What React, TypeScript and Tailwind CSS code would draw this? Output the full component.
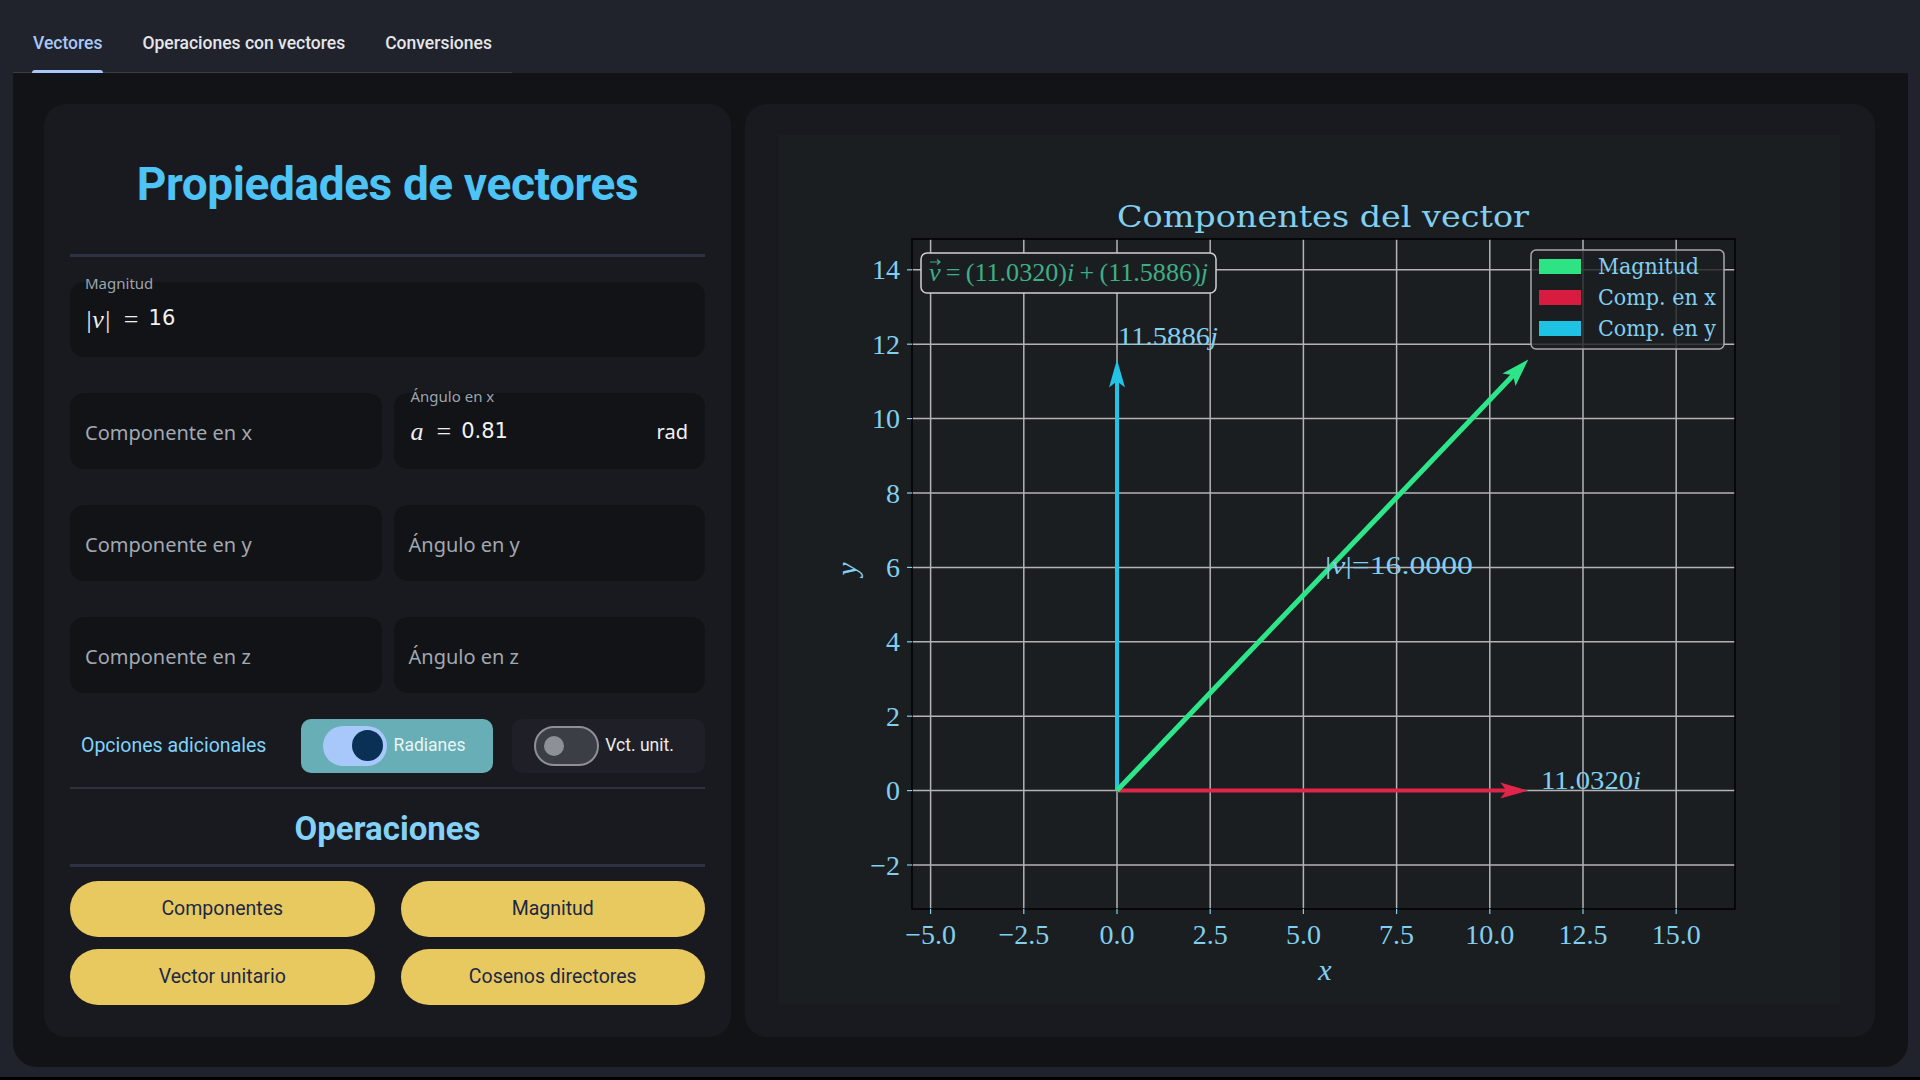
import React from "react";

const X = (x: number) => 1117 + 37.28 * x;
const Y = (y: number) => 790.6 - 37.2 * y;

type ArrowProps = { x1: number; y1: number; x2: number; y2: number; color: string; w: number; head?: number; hw?: number };

function Arrow({ x1, y1, x2, y2, color, w, head = 26, hw = 10 }: ArrowProps) {
  const dx = x2 - x1;
  const dy = y2 - y1;
  const L = Math.hypot(dx, dy);
  const ux = dx / L;
  const uy = dy / L;
  const nx = -uy;
  const ny = ux;
  const bx = x2 - ux * head;
  const by = y2 - uy * head;
  const mx = x2 - ux * head * 0.78;
  const my = y2 - uy * head * 0.78;
  const pts = [
    [x2, y2],
    [bx + nx * hw, by + ny * hw],
    [mx, my],
    [bx - nx * hw, by - ny * hw],
  ]
    .map((p) => p.join(","))
    .join(" ");
  return (
    <g>
      <line x1={x1} y1={y1} x2={mx} y2={my} stroke={color} strokeWidth={w} />
      <polygon points={pts} fill={color} />
    </g>
  );
}

function Plot() {
  const xt = [-5, -2.5, 0, 2.5, 5, 7.5, 10, 12.5, 15];
  const yt = [-2, 0, 2, 4, 6, 8, 10, 12, 14];
  const blue = "#82cff0";
  const fmt = (v: number) => (v < 0 ? "\u2212" + Math.abs(v).toFixed(1) : v.toFixed(1));
  const fmtY = (v: number) => (v < 0 ? "\u2212" + Math.abs(v) : String(v));
  return (
    <svg width="1061" height="869" viewBox="779 135 1061 869" className="block">
      <rect x="912" y="239" width="823" height="670" fill="#1b1e21" />
      {xt.map((v) => (
        <line key={"gx" + v} x1={X(v)} y1="239" x2={X(v)} y2="909" stroke="#b4b4b4" strokeWidth="1.5" />
      ))}
      {yt.map((v) => (
        <line key={"gy" + v} x1="912" y1={Y(v)} x2="1735" y2={Y(v)} stroke="#b4b4b4" strokeWidth="1.5" />
      ))}
      <rect x="912" y="239" width="823" height="670" fill="none" stroke="#000" strokeWidth="1.5" />
      {xt.map((v) => (
        <g key={"tx" + v}>
          <line x1={X(v)} y1="909" x2={X(v)} y2="914" stroke={blue} strokeWidth="1.2" />
          <text x={X(v)} y="944" fill={blue} fontSize="28" textAnchor="middle" fontFamily="'Liberation Serif', serif">
            {fmt(v)}
          </text>
        </g>
      ))}
      {yt.map((v) => (
        <g key={"ty" + v}>
          <line x1="907" y1={Y(v)} x2="912" y2={Y(v)} stroke={blue} strokeWidth="1.2" />
          <text x="900" y={Y(v) + 9.5} fill={blue} fontSize="28" textAnchor="end" fontFamily="'Liberation Serif', serif">
            {fmtY(v)}
          </text>
        </g>
      ))}
      <text x="1323" y="227" fill={blue} fontSize="30" textAnchor="middle" textLength="412" lengthAdjust="spacingAndGlyphs" fontFamily="'DejaVu Serif', serif">
        Componentes del vector
      </text>
      <text x="1325" y="980" fill={blue} fontSize="30" textAnchor="middle" fontStyle="italic" fontFamily="'Liberation Serif', serif">
        x
      </text>
      <text x="0" y="0" fill={blue} fontSize="30" textAnchor="middle" fontStyle="italic" fontFamily="'Liberation Serif', serif" transform="translate(857 569) rotate(-90)">
        y
      </text>

      <Arrow x1={X(0)} y1={Y(0)} x2={X(11.032)} y2={Y(0)} color="#e0254a" w={4} head={28} hw={8} />
      <Arrow x1={X(0)} y1={Y(0)} x2={X(0)} y2={Y(11.5886)} color="#22c3e4" w={4} head={28} hw={8} />
      <Arrow x1={X(0)} y1={Y(0)} x2={X(11.032)} y2={Y(11.5886)} color="#2ee68a" w={5} head={28} hw={9} />

      <text x="1118" y="345" fill={blue} fontSize="26" textLength="100" lengthAdjust="spacingAndGlyphs" fontFamily="'Liberation Serif', serif">
        11.5886<tspan fontStyle="italic">j</tspan>
      </text>
      <text x="1541" y="789" fill={blue} fontSize="26" textLength="100" lengthAdjust="spacingAndGlyphs" fontFamily="'Liberation Serif', serif">
        11.0320<tspan fontStyle="italic">i</tspan>
      </text>
      <text x="1325" y="574" fill={blue} fontSize="26" textLength="148" lengthAdjust="spacingAndGlyphs" fontFamily="'Liberation Serif', serif">
        |<tspan fontStyle="italic">v</tspan>|=16.0000
      </text>

      <rect x="921" y="253" width="295" height="40" rx="6" fill="#1b1e21" stroke="#cfcfcf" strokeWidth="1.5" />
      <path d="M930 262 L940 262 M937 259.5 L940 262 L937 264.5" stroke="#3fae84" strokeWidth="1.2" fill="none" />
      <text x="929" y="281" fill="#3fae84" fontSize="25" textLength="279" lengthAdjust="spacingAndGlyphs" fontFamily="'Liberation Serif', serif">
        <tspan fontStyle="italic">v</tspan>{"\u2009=\u2009"}(11.0320)<tspan fontStyle="italic">i</tspan>{"\u2009+\u2009"}(11.5886)<tspan fontStyle="italic">j</tspan>
      </text>

      <rect x="1531" y="250" width="193" height="99" rx="5" fill="#1b1e21" fillOpacity="0.8" stroke="#a8a8a8" strokeWidth="1.5" />
      <rect x="1539" y="259" width="42" height="15" fill="#2de383" />
      <rect x="1539" y="290" width="42" height="15" fill="#d71c40" />
      <rect x="1539" y="321" width="42" height="15" fill="#1ec3e3" />
      <text x="1598" y="274" fill={blue} fontSize="22" textLength="101" lengthAdjust="spacingAndGlyphs" fontFamily="'DejaVu Serif', serif">
        Magnitud
      </text>
      <text x="1598" y="305" fill={blue} fontSize="22" textLength="118" lengthAdjust="spacingAndGlyphs" fontFamily="'DejaVu Serif', serif">
        Comp. en x
      </text>
      <text x="1598" y="336" fill={blue} fontSize="22" textLength="118" lengthAdjust="spacingAndGlyphs" fontFamily="'DejaVu Serif', serif">
        Comp. en y
      </text>
    </svg>
  );
}

function Field({ placeholder }: { placeholder: string }) {
  return (
    <div className="h-[76px] rounded-[14px] bg-[#121317] flex items-center px-[15px] pt-[4px]">
      <span className="text-[20px] text-[#a1a8b1] font-['Noto_Sans',sans-serif]">{placeholder}</span>
    </div>
  );
}

export default function App() {
  return (
    <div className="w-[1920px] h-[1080px] bg-[#20232b] flex flex-col overflow-hidden font-['Roboto',sans-serif]">
      {/* Tabs */}
      <div className="h-[73px] flex items-end">
        <div className="ml-[13px] flex border-b border-[#3a3d45] h-[60px] whitespace-nowrap">
          <div className="relative shrink-0 px-[20px] flex items-center pt-[1px]">
            <span className="text-[17.5px] font-medium text-[#a8c7fa]">Vectores</span>
            <div className="absolute left-[19px] right-[19px] bottom-[-1px] h-[3px] rounded-t-[3px] bg-[#a8c7fa]" />
          </div>
          <div className="shrink-0 px-[20px] flex items-center pt-[1px]">
            <span className="text-[17.5px] font-medium text-[#e4e6ea]">Operaciones con vectores</span>
          </div>
          <div className="shrink-0 px-[20px] flex items-center pt-[1px]">
            <span className="text-[17.5px] font-medium text-[#e4e6ea]">Conversiones</span>
          </div>
        </div>
      </div>

      {/* Main */}
      <div className="ml-[13px] mr-[12px] h-[994px] bg-[#111317] rounded-b-[24px] flex gap-[14px] pl-[31px] pr-[33px] pt-[31px] pb-[30px]">
        {/* Left panel */}
        <div className="w-[687px] shrink-0 bg-[#191a1f] rounded-[22px] px-[26px] pt-[56px] pb-[32px] flex flex-col">
          <h1 className="text-center leading-[48px] text-[46px] font-bold tracking-[-0.4px] text-[#4ec3f6]">
            Propiedades de vectores
          </h1>
          <div className="mt-[46px] h-[3px] bg-[#2e3142]" />

          <div className="relative mt-[25px] h-[75px] rounded-[14px] bg-[#121317] flex items-center px-[15px]">
            <span className="absolute left-[15px] top-[-10px] text-[15px] text-[#9ca5af] font-['Noto_Sans',sans-serif]">Magnitud</span>
            <span className="text-[26px] italic text-[#eeeeee] font-['Liberation_Serif',serif]">|v|</span>
            <span className="ml-[13px] text-[26px] text-[#eeeeee] font-['Liberation_Serif',serif]">=</span>
            <span className="ml-[10px] text-[21px] text-[#f2f2f2] font-['DejaVu_Sans',sans-serif]">16</span>
          </div>

          <div className="mt-[36px] grid grid-cols-2 gap-x-[12px] gap-y-[36px]">
            <Field placeholder="Componente en x" />
            <div className="relative h-[76px] rounded-[14px] bg-[#121317] flex items-center px-[17px] pt-[2px]">
              <span className="absolute left-[17px] top-[-8px] text-[15px] text-[#9ca5af] font-['Noto_Sans',sans-serif]">Ángulo en x</span>
              <span className="text-[26px] italic text-[#eeeeee] font-['Liberation_Serif',serif]">a</span>
              <span className="ml-[13px] text-[26px] text-[#eeeeee] font-['Liberation_Serif',serif]">=</span>
              <span className="ml-[10px] text-[21px] text-[#f2f2f2] font-['DejaVu_Sans',sans-serif]">0.81</span>
              <span className="ml-auto text-[20px] text-[#f2f2f2] font-['Noto_Sans',sans-serif]">rad</span>
            </div>
            <Field placeholder="Componente en y" />
            <Field placeholder="Ángulo en y" />
            <Field placeholder="Componente en z" />
            <Field placeholder="Ángulo en z" />
          </div>

          <div className="mt-[26px] h-[54px] flex items-center">
            <div className="w-[231px] pl-[11px] text-[19.5px] text-[#7fd3fb]">Opciones adicionales</div>
            <div className="w-[193px] h-[54px] rounded-[10px] bg-[#67aeb6] flex items-center pl-[22px]">
              <div className="w-[64px] h-[40px] rounded-full bg-[#a8c7fa] flex items-center justify-end pr-[4px]">
                <div className="w-[31px] h-[31px] rounded-full bg-[#0a3055]" />
              </div>
              <span className="ml-[7px] text-[17.5px] text-[#eaf4f4]">Radianes</span>
            </div>
            <div className="ml-[19px] w-[193px] h-[54px] rounded-[10px] bg-[#1f2027] flex items-center pl-[22px]">
              <div className="w-[65px] h-[40px] rounded-full border-2 border-[#8d9096] bg-[#3b3e45] flex items-center pl-[8px]">
                <div className="w-[20px] h-[20px] rounded-full bg-[#8d9096]" />
              </div>
              <span className="ml-[6px] text-[17.5px] text-[#ececec]">Vct. unit.</span>
            </div>
          </div>

          <div className="mt-[14px] h-[3px] bg-[#2e3142]" />
          <div className="h-[75px] flex items-center justify-center pt-[4px] text-[33px] font-bold text-[#84d2f9]">Operaciones</div>
          <div className="h-[3px] bg-[#2e3142]" />

          <div className="mt-[14px] grid grid-cols-2 gap-x-[26px] gap-y-[12px]">
            {["Componentes", "Magnitud", "Vector unitario", "Cosenos directores"].map((t) => (
              <div key={t} className="h-[56px] rounded-full bg-[#e8c95f] flex items-center justify-center text-[19.5px] text-[#1b2846]">
                {t}
              </div>
            ))}
          </div>
        </div>

        {/* Right panel */}
        <div className="flex-1 bg-[#191a1f] rounded-[22px] pl-[34px] pr-[35px] pt-[31px] pb-[33px]">
          <div className="w-[1061px] h-[869px] bg-[#1b1e21]">
            <Plot />
          </div>
        </div>
      </div>
      <div className="h-[10px]" />
      <div className="h-[3px] bg-black" />
    </div>
  );
}
